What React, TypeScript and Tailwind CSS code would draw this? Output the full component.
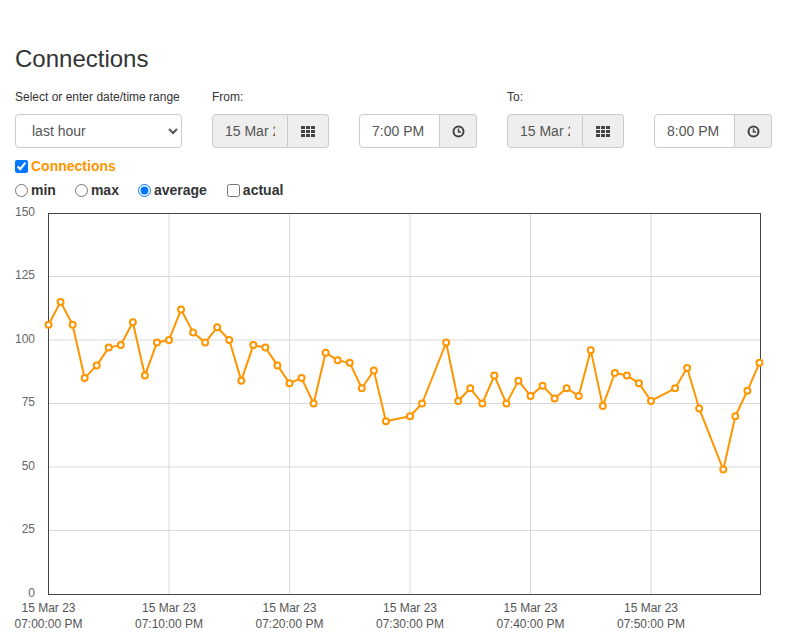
import React from "react";

const data: (number | null)[] = [
  106, 115, 106, 85, 90, 97, 98, 107, 86, 99,
  100, 112, 103, 99, 105, 100, 84, 98, 97, 90,
  83, 85, 75, 95, 92, 91, 81, 88, 68, null,
  70, 75, null, 99, 76, 81, 75, 86, 75, 84,
  78, 82, 77, 81, 78, 96, 74, 87, 86, 83,
  76, null, 81, 89, 73, null, 49, 70, 80, 91,
];

const X0 = 48.5;
const X1 = 760.5;
const Y0 = 594.5;
const Y1 = 213.5;
const px = (m: number) => X0 + 12.05 * m;
const py = (v: number) => 594 - 2.54 * v;

const GridIcon = () => (
  <svg width="14" height="11" viewBox="0 0 14 11" fill="#444">
    {[0, 5, 10].map((x) =>
      [0, 4, 8].map((y) => <rect key={`${x}-${y}`} x={x} y={y} width="4" height="3" />)
    )}
  </svg>
);

const ClockIcon = () => (
  <svg width="13" height="13" viewBox="0 0 13 13" fill="none" stroke="#444" strokeWidth="2">
    <circle cx="6.5" cy="6.5" r="5" />
    <path d="M6.5 3.5V7H9" strokeWidth="1.5" />
  </svg>
);

const DateGroup = () => (
  <div className="flex h-[34px]">
    <input
      readOnly
      value="15 Mar 2023"
      className="w-[76px] h-full px-3 bg-[#eeeeee] border border-[#cccccc] rounded-l-[4px] text-[14px] text-[#555555] outline-none"
    />
    <div className="w-[41px] h-full flex items-center justify-center bg-[#eeeeee] border border-l-0 border-[#cccccc] rounded-r-[4px]">
      <GridIcon />
    </div>
  </div>
);

const TimeGroup = ({ value }: { value: string }) => (
  <div className="flex h-[34px]">
    <input
      readOnly
      value={value}
      className="w-[81px] h-full px-3 bg-white border border-[#cccccc] rounded-l-[4px] text-[14px] text-[#555555] outline-none"
    />
    <div className="w-[37px] h-full flex items-center justify-center bg-[#eeeeee] border border-l-0 border-[#cccccc] rounded-r-[4px]">
      <ClockIcon />
    </div>
  </div>
);

const Chart = () => {
  const pts = data
    .map((v, i) => (v === null ? null : [px(i), py(v)]))
    .filter((p): p is number[] => p !== null);
  const yTicks = [0, 25, 50, 75, 100, 125, 150];
  const xTicks = [0, 10, 20, 30, 40, 50];
  const times = ["07:00:00 PM", "07:10:00 PM", "07:20:00 PM", "07:30:00 PM", "07:40:00 PM", "07:50:00 PM"];

  return (
    <svg width="787" height="429" viewBox="0 205 787 429" className="block mt-[5px]" style={{ fontFamily: '"Liberation Sans", Arial, sans-serif' }}>
      {yTicks.slice(1, -1).map((t) => (
        <line key={t} x1={X0} x2={X1} y1={py(t)} y2={py(t)} stroke="#d9d9d9" strokeWidth="1" />
      ))}
      {xTicks.slice(1).map((m) => (
        <line key={m} x1={px(m)} x2={px(m)} y1={Y1} y2={Y0} stroke="#d9d9d9" strokeWidth="1" />
      ))}
      <rect x={X0} y={Y1} width={X1 - X0} height={Y0 - Y1} fill="none" stroke="#444" strokeWidth="1" />
      {yTicks.map((t) => (
        <text key={t} x="35" y={py(t) - 1.5} textAnchor="end" dominantBaseline="central" fontSize="12" fill="#666">
          {t}
        </text>
      ))}
      {xTicks.map((m, i) => (
        <g key={m} fontSize="12" fill="#555" textAnchor="middle">
          <text x={px(m)} y="611.5">15 Mar 23</text>
          <text x={px(m)} y="628">{times[i]}</text>
        </g>
      ))}
      <polyline points={pts.map((p) => p.join(",")).join(" ")} fill="none" stroke="#ff9500" strokeWidth="2" strokeLinejoin="round" />
      {pts.map((p, i) => (
        <circle key={i} cx={p[0]} cy={p[1]} r="3" fill="#fff" stroke="#ff9500" strokeWidth="2" />
      ))}
    </svg>
  );
};

export default function App() {
  return (
    <div className="bg-white text-[#333333] min-h-[634px] w-[787px]" style={{ fontFamily: '"Liberation Sans", Arial, sans-serif' }}>
      <div className="px-[15px] pt-[46px]">
        <h3 className="text-[24px] leading-[26px] font-normal">Connections</h3>

        <div className="flex mt-[17px]">
          <div className="w-[197px]">
            <div className="text-[12px] leading-[17px] h-[17px]">Select or enter date/time range</div>
            <select className="mt-[8px] w-[167px] h-[34px] pl-[12px] pr-2 border border-[#cccccc] rounded-[4px] bg-white text-[14px] text-[#555555] outline-none">
              <option>last hour</option>
            </select>
          </div>
          <div>
            <div className="text-[12px] leading-[17px] h-[17px]">From:</div>
            <div className="mt-[8px] flex gap-[30px]">
              <DateGroup />
              <TimeGroup value="7:00 PM" />
            </div>
          </div>
          <div className="ml-[30px]">
            <div className="text-[12px] leading-[17px] h-[17px]">To:</div>
            <div className="mt-[8px] flex gap-[30px]">
              <DateGroup />
              <TimeGroup value="8:00 PM" />
            </div>
          </div>
        </div>

        <label className="mt-[8px] flex items-center h-[20px] text-[14px] font-bold text-[#ff9500]">
          <input type="checkbox" defaultChecked className="w-[13px] h-[13px] m-0 mr-[3px]" />
          Connections
        </label>
        <div className="mt-[4px] flex items-center h-[20px] text-[14px] font-bold text-[#333333]">
          <label className="flex items-center mr-[19px]">
            <input type="radio" name="agg" className="w-[13px] h-[13px] m-0 mr-[3px]" />
            min
          </label>
          <label className="flex items-center mr-[19px]">
            <input type="radio" name="agg" className="w-[13px] h-[13px] m-0 mr-[3px]" />
            max
          </label>
          <label className="flex items-center mr-[20px]">
            <input type="radio" name="agg" defaultChecked className="w-[13px] h-[13px] m-0 mr-[3px]" />
            average
          </label>
          <label className="flex items-center">
            <input type="checkbox" className="w-[13px] h-[13px] m-0 mr-[3px]" />
            actual
          </label>
        </div>
      </div>
      <Chart />
    </div>
  );
}
